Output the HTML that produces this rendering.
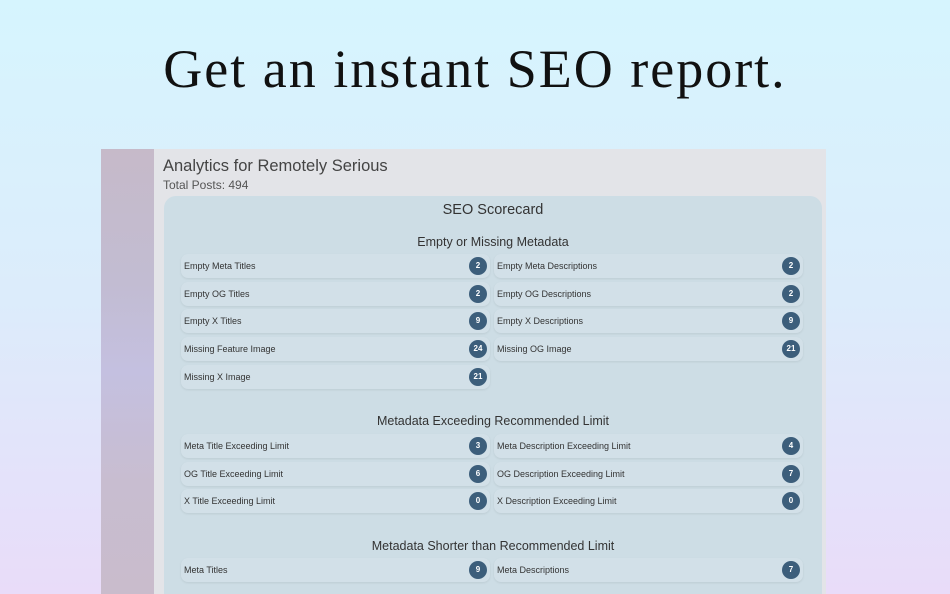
<!DOCTYPE html>
<html><head><style>
*{margin:0;padding:0;box-sizing:border-box}
html,body{width:950px;height:594px;overflow:hidden}
body{position:relative;background:linear-gradient(180deg,#d6f5fe 0%,#dcecfb 50%,#e9dcf9 100%);font-family:"Liberation Sans",sans-serif}
h1{position:absolute;top:38px;left:0;width:950px;text-align:center;font-family:"Liberation Serif",serif;font-weight:normal;font-size:54px;color:#111;letter-spacing:2px}
.win{position:absolute;left:101px;top:149px;width:725px;height:445px;background:#e3e4e8;overflow:hidden}
.side{position:absolute;left:0;top:0;width:53px;height:445px;background:linear-gradient(180deg,#c6bac9 0%,#c2bcd2 30%,#c4c0e0 50%,#c8bdd0 75%,#c9bccc 100%)}
.t1{position:absolute;left:62px;top:8px;font-size:16.5px;color:#444}
.t2{position:absolute;left:62px;top:29px;font-size:12px;color:#555}
.card{position:absolute;left:63px;top:47px;width:658px;height:420px;background:#cddde5;border-radius:12px}
.h{position:absolute;left:0;width:658px;text-align:center;color:#333}
.row{position:absolute;width:309px;height:24px;background:#d2e0e8;border-radius:7px;box-shadow:0 1px 2px rgba(0,0,0,0.08);font-size:9px;color:#333;line-height:24px;padding-left:3px}
.b{position:absolute;right:3px;top:3px;width:18px;height:18px;border-radius:50%;background:#3c5e7b;color:#fff;font-size:8px;font-weight:bold;text-align:center;line-height:18px}
</style></head><body>
<h1>Get an instant SEO report.</h1>
<div class="win">
<div class="side"></div>
<div class="t1">Analytics for Remotely Serious</div>
<div class="t2">Total Posts: 494</div>
<div class="card">
<div class="h" style="top:6px;font-size:14.5px">SEO Scorecard</div>
<div class="h" style="top:39px;font-size:12.5px">Empty or Missing Metadata</div>
<div class="row" style="left:17px;top:58px">Empty Meta Titles<span class="b">2</span></div>
<div class="row" style="left:330px;top:58px">Empty Meta Descriptions<span class="b">2</span></div>
<div class="row" style="left:17px;top:86px">Empty OG Titles<span class="b">2</span></div>
<div class="row" style="left:330px;top:86px">Empty OG Descriptions<span class="b">2</span></div>
<div class="row" style="left:17px;top:113px">Empty X Titles<span class="b">9</span></div>
<div class="row" style="left:330px;top:113px">Empty X Descriptions<span class="b">9</span></div>
<div class="row" style="left:17px;top:141px">Missing Feature Image<span class="b">24</span></div>
<div class="row" style="left:330px;top:141px">Missing OG Image<span class="b">21</span></div>
<div class="row" style="left:17px;top:169px">Missing X Image<span class="b">21</span></div>
<div class="h" style="top:218px;font-size:12.5px">Metadata Exceeding Recommended Limit</div>
<div class="row" style="left:17px;top:238px">Meta Title Exceeding Limit<span class="b">3</span></div>
<div class="row" style="left:330px;top:238px">Meta Description Exceeding Limit<span class="b">4</span></div>
<div class="row" style="left:17px;top:266px">OG Title Exceeding Limit<span class="b">6</span></div>
<div class="row" style="left:330px;top:266px">OG Description Exceeding Limit<span class="b">7</span></div>
<div class="row" style="left:17px;top:293px">X Title Exceeding Limit<span class="b">0</span></div>
<div class="row" style="left:330px;top:293px">X Description Exceeding Limit<span class="b">0</span></div>
<div class="h" style="top:343px;font-size:12.5px">Metadata Shorter than Recommended Limit</div>
<div class="row" style="left:17px;top:362px">Meta Titles<span class="b">9</span></div>
<div class="row" style="left:330px;top:362px">Meta Descriptions<span class="b">7</span></div>
</div>
</div>
</body></html>
